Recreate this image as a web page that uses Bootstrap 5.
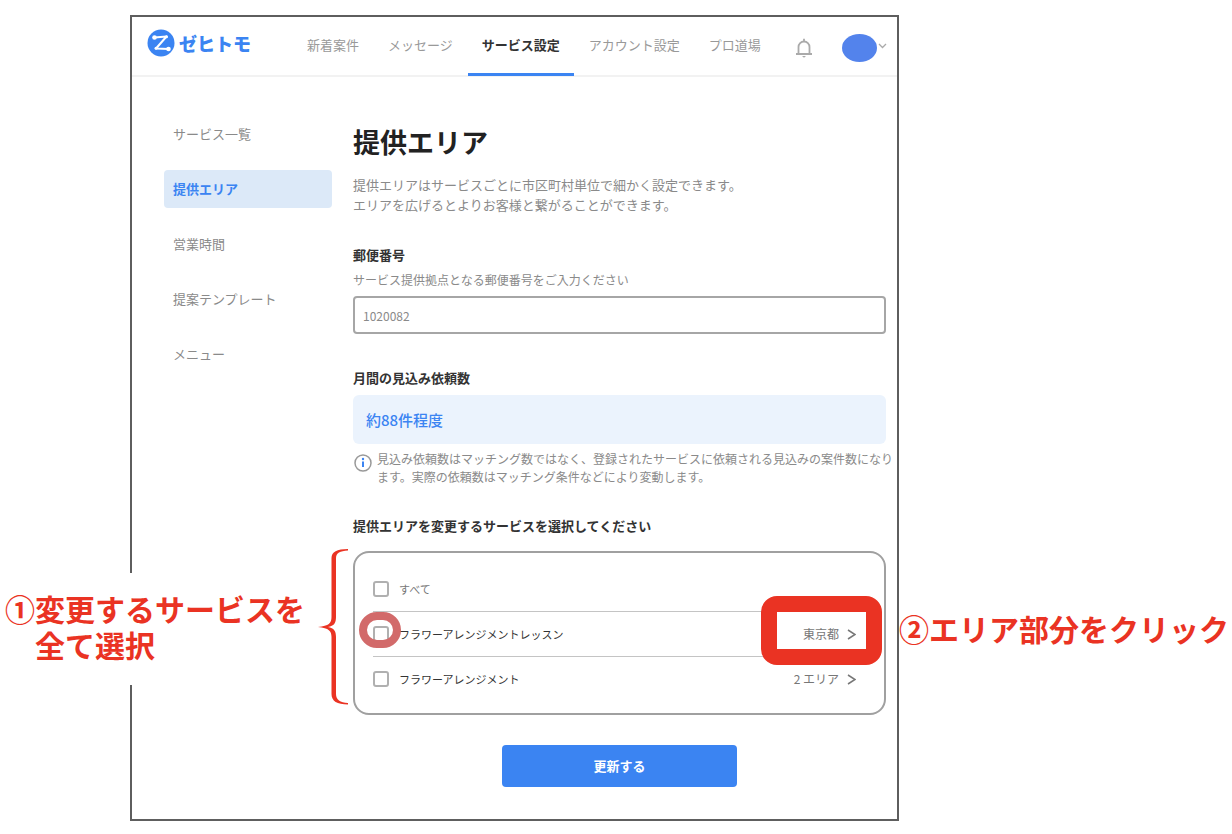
<!DOCTYPE html>
<html lang="ja">
<head>
<meta charset="utf-8">
<meta name="viewport" content="width=device-width, initial-scale=1">
<title>提供エリア | ゼヒトモ</title>
<link href="https://cdn.jsdelivr.net/npm/bootstrap@5.3.0/dist/css/bootstrap.min.css" rel="stylesheet">
<style>
  :root { --zt-blue: #3b84f2; --zt-red: #ea3323; --zt-gray: #8a8a8a; --zt-dark: #333; }
  body { font-family: "Noto Sans CJK JP", sans-serif; font-size: 13px; line-height: 20px; color: var(--zt-gray); background: #fff; }
  a { color: inherit; text-decoration: none; }

  .stage { display: grid; grid-template-columns: 130fr minmax(0, 769fr) 333fr; padding: 15px 0 12px; }
  .app-frame { grid-column: 2; border: 2px solid #5e5e5e; }

  .app-header { height: 60px; border-bottom: 2px solid #f2f2f2; padding-left: 15px; }
  .brand-link { padding-bottom: 6px; }
  .brand-name { font-size: 18px; line-height: 28px; font-weight: 900; color: var(--zt-blue); }
  .main-tabs { gap: 1px; margin-left: 42px; color: #999; }
  .main-tabs a { display: flex; align-items: center; height: 60px; padding: 0 14px; white-space: nowrap; border-bottom: 3px solid transparent; }
  .main-tabs a.current { color: var(--zt-dark); font-weight: 700; border-color: var(--zt-blue); }
  .icon-btn { border: 0; background: none; padding: 4px 0 0; display: flex; align-items: center; }
  .avatar { width: 35px; height: 28px; border-radius: 50%; background: #5383ec; }

  .app-body { padding: 38px 11px 32px 32px; gap: 21px; }
  .side-menu { flex: 0 0 168px; gap: 17px; }
  .side-menu a { height: 38px; line-height: 38px; padding: 0 9px; border-radius: 4px; }
  .side-menu a.current { background: #dce9f8; color: var(--zt-blue); font-weight: 700; }

  .area-form { min-width: 0; padding-top: 9px; }
  .area-form h1 { font-size: 27px; line-height: 36px; font-weight: 700; color: #222; margin-bottom: 15px; }
  .field-title { display: block; font-size: 13px; line-height: 20px; font-weight: 700; color: var(--zt-dark); margin: 0; }
  .form-block { margin-top: 30px; }
  .help-text { font-size: 12px; line-height: 20px; margin: 5px 0 6px; }
  .zip-input { height: 38px; font-size: 12px; color: var(--zt-gray); border: 2px solid #a6a6a6; border-radius: 4px; padding: 0 8px; }
  .estimate { height: 49px; line-height: 49px; font-size: 15px; font-weight: 500; color: var(--zt-blue); background: #ebf3fd; border-radius: 6px; padding: 0 13px; margin: 7px 0 6px; }
  .note-text { font-size: 12px; line-height: 18px; white-space: nowrap; }

  .service-box { border: 2px solid #a0a0a0; border-radius: 16px; padding: 13px 28px 12px 18px; margin-top: 15px; }
  .service-row { height: 45px; font-size: 12px; gap: 10px; }
  .service-row + .service-row { border-top: 1px solid #c4c4c4; }
  .service-row label { font-size: 11px; color: var(--zt-dark); }
  .service-row .label-all { color: #777; }
  .service-row .form-check-input { width: 16px; height: 16px; margin: 0; border: 2px solid #b0b0b0; border-radius: 3px; }
  .area-link { color: #777; gap: 8px; }
  .update-btn { width: 235px; height: 42px; padding: 0; font-size: 13px; font-weight: 700; color: #fff; background: var(--zt-blue); border: 0; border-radius: 4px; margin-top: 30px; }

  /* Instruction marks drawn over the screen */
  .callout { position: absolute; color: var(--zt-red); font-size: 30px; line-height: 36px; font-weight: 700; white-space: nowrap; }
  .callout-select { right: calc(100% + 50px); top: 20px; background: #fff; padding: 17px 0 23px 30px; text-indent: -30px; }
  .callout-area { left: calc(100% + 15px); top: 57px; }
  .brace { position: absolute; right: calc(100% + 6px); top: -4px; }
  .ring { position: absolute; left: -14px; top: 0; width: 42px; height: 36px; border: 8px solid #d26a6a; border-radius: 18px; pointer-events: none; }
  .area-mark { position: absolute; right: -26px; top: -16px; width: 121px; height: 69px; border: 16px solid var(--zt-red); border-radius: 16px; pointer-events: none; }
</style>
</head>
<body>
<div class="stage">
  <div class="app-frame">
    <header class="app-header d-flex align-items-center">
      <a href="#" class="brand-link d-flex align-items-center">
        <svg width="28" height="28" viewBox="0 0 28 28" aria-hidden="true">
          <circle cx="14" cy="14" r="13.500" fill="#3b84f2"/>
          <path d="M7.500 8.500 19.500 7.500 9 19.500 21.500 20" fill="none" stroke="#fff" stroke-width="2" stroke-linejoin="round"/>
          <circle cx="7.500" cy="8.500" r="2.300" fill="#fff"/><circle cx="21.500" cy="20" r="2.300" fill="#fff"/>
          <circle cx="19.500" cy="7.800" r="1.500" fill="#fff"/><circle cx="9" cy="19.300" r="1.500" fill="#fff"/>
        </svg>
        <span class="brand-name ms-1">ゼヒトモ</span>
      </a>
      <nav class="main-tabs d-flex">
        <a href="#">新着案件</a>
        <a href="#">メッセージ</a>
        <a href="#" class="current" aria-current="page">サービス設定</a>
        <a href="#">アカウント設定</a>
        <a href="#">プロ道場</a>
      </nav>
      <button type="button" class="icon-btn ms-3 ps-1" aria-label="お知らせ">
        <svg width="18" height="20" viewBox="0 0 18 20" fill="none" stroke="#aaa" stroke-width="1.800">
          <path d="M1 16h16M3.500 16V9a5.500 5.500 0 0 1 11 0V16M9 3.500V.8"/><path d="M7 18h4l-2 1.800z" fill="#aaa" stroke="none"/>
        </svg>
      </button>
      <button type="button" class="icon-btn ms-auto me-2" aria-label="アカウントメニュー">
        <span class="avatar"></span>
        <svg width="12" height="12" viewBox="0 0 12 12" fill="none" stroke="#aaa" stroke-width="1.300"><path d="M2 2 5.500 5.500 9 2"/></svg>
      </button>
    </header>

    <div class="app-body d-flex">
      <nav class="side-menu d-flex flex-column">
        <a href="#">サービス一覧</a>
        <a href="#" class="current" aria-current="page">提供エリア</a>
        <a href="#">営業時間</a>
        <a href="#">提案テンプレート</a>
        <a href="#">メニュー</a>
      </nav>

      <form class="area-form flex-grow-1">
        <h1>提供エリア</h1>
        <p class="mb-0">提供エリアはサービスごとに市区町村単位で細かく設定できます。<br>エリアを広げるとよりお客様と繋がることができます。</p>

        <div class="form-block">
          <label for="zip" class="field-title">郵便番号</label>
          <p id="zip-help" class="help-text">サービス提供拠点となる郵便番号をご入力ください</p>
          <input id="zip" type="text" class="form-control zip-input" value="1020082" aria-describedby="zip-help">
        </div>

        <div class="form-block">
          <h2 class="field-title pt-1">月間の見込み依頼数</h2>
          <div class="estimate">約88件程度</div>
          <div class="d-flex">
            <svg class="flex-shrink-0 mt-1" width="20" height="18" viewBox="0 0 20 18" aria-hidden="true">
              <circle cx="10" cy="9" r="8" fill="none" stroke="#999" stroke-width="1.500"/>
              <path d="M10 7.500V13" stroke="#3b84f2" stroke-width="2"/><circle cx="10" cy="5" r="1.200" fill="#3b84f2"/>
            </svg>
            <p class="note-text mb-0 ms-1">見込み依頼数はマッチング数ではなく、登録されたサービスに依頼される見込みの案件数になり<br>ます。実際の依頼数はマッチング条件などにより変動します。</p>
          </div>
        </div>

        <div class="form-block">
          <h2 class="field-title">提供エリアを変更するサービスを選択してください</h2>
          <div class="service-box position-relative">
            <div class="service-row d-flex align-items-center">
              <input class="form-check-input" type="checkbox" id="svc-all">
              <label for="svc-all" class="label-all">すべて</label>
            </div>
            <div class="service-row d-flex align-items-center position-relative">
              <input class="form-check-input" type="checkbox" id="svc-lesson">
              <span class="ring"></span>
              <label for="svc-lesson" class="position-relative">フラワーアレンジメントレッスン</label>
              <a href="#" class="area-link d-flex align-items-center ms-auto">東京都
                <svg width="9" height="11" viewBox="0 0 9 11" fill="none" stroke="#777" stroke-width="1.500"><path d="M1 1 8 5.500 1 10"/></svg></a>
              <span class="area-mark"></span>
            </div>
            <div class="service-row d-flex align-items-center">
              <input class="form-check-input" type="checkbox" id="svc-arr">
              <label for="svc-arr">フラワーアレンジメント</label>
              <a href="#" class="area-link d-flex align-items-center ms-auto">2 エリア
                <svg width="9" height="11" viewBox="0 0 9 11" fill="none" stroke="#777" stroke-width="1.500"><path d="M1 1 8 5.500 1 10"/></svg></a>
            </div>

            <div class="callout callout-select">①変更するサービスを<br>全て選択</div>
            <svg class="brace" width="32" height="156" viewBox="0 0 32 156" aria-hidden="true">
              <path d="M31 0C20 0 14.500 3 14.500 9V68C14.500 74 12 77 1 78C12 79 14.500 82 14.500 88V145C14.500 152 20 155.500 31 155.500V154C23 153.500 19 151 19 145V88C19 82 17 79 11 78C17 77 19 74 19 68V9C19 4 23 2 31 1.500Z" fill="#ea3323"/>
            </svg>
            <div class="callout callout-area">②エリア部分をクリック</div>
          </div>
        </div>

        <div class="text-center"><button type="submit" class="btn update-btn">更新する</button></div>
      </form>
    </div>
  </div>
</div>
<script src="https://cdn.jsdelivr.net/npm/bootstrap@5.3.0/dist/js/bootstrap.bundle.min.js"></script>
</body>
</html>
